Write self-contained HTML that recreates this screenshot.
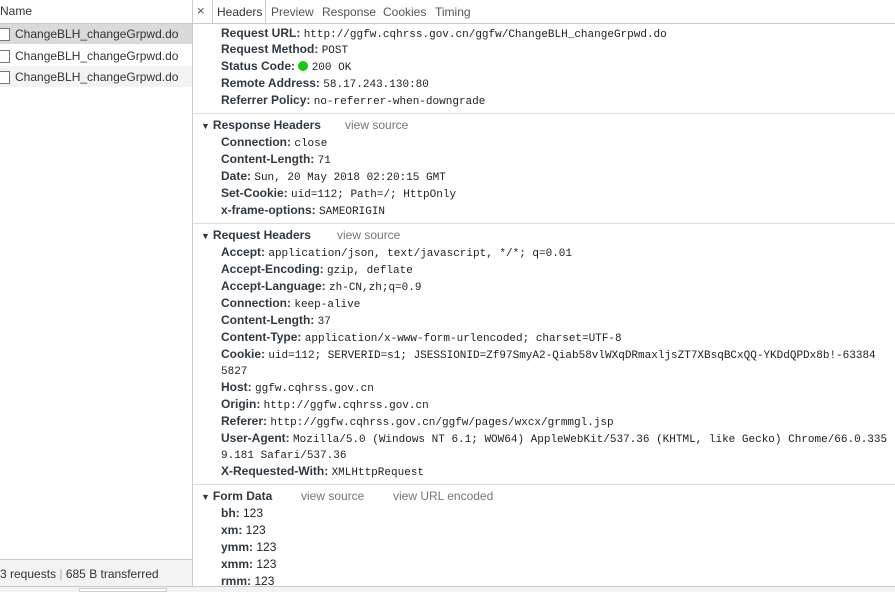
<!DOCTYPE html><html><head><style>
*{margin:0;padding:0;box-sizing:border-box}
body{width:895px;height:592px;overflow:hidden;background:#fff;font-family:"Liberation Sans",sans-serif;font-size:12px;color:#222;position:relative}
.a{position:absolute;white-space:nowrap}
.k{position:absolute;left:221px;white-space:nowrap;color:#222}
.k b{color:#303942;font-weight:bold}
.m{font-family:"Liberation Mono",monospace;font-size:11px;color:#222}
.h{position:absolute;left:201px;white-space:nowrap;font-weight:bold;color:#303942}
.h i{font-style:normal;font-size:9px;margin-right:3px}
.vs{position:absolute;color:#777;white-space:nowrap}
.sep{position:absolute;left:193px;right:0;height:1px;background:#ddd}
.cb{display:inline-block;width:12px;height:13px;border:1px solid #777;vertical-align:middle;margin-right:5px;margin-left:-2px;background:#fff}
</style></head><body>
<!-- left panel -->
<div class="a" style="left:0;top:4px;color:#333">Name</div>
<div class="a" style="left:0;top:23px;width:192px;height:1px;background:#ccc"></div>
<div class="a" style="left:0;top:24px;width:192px;height:20px;background:#dadada"></div>
<div class="a" style="left:0;top:66px;width:192px;height:21px;background:#f3f3f3"></div>
<div class="a" style="left:0;top:26px;line-height:16px;color:#333"><span class="cb"></span>ChangeBLH_changeGrpwd.do</div>
<div class="a" style="left:0;top:48px;line-height:16px;color:#333"><span class="cb"></span>ChangeBLH_changeGrpwd.do</div>
<div class="a" style="left:0;top:69px;line-height:16px;color:#333"><span class="cb"></span>ChangeBLH_changeGrpwd.do</div>
<div class="a" style="left:0;top:559px;width:192px;height:27px;background:#f3f3f3;border-top:1px solid #ccc"></div>
<div class="a" style="left:0;top:567px;color:#333">3 requests <span style="color:#aaa">|</span> 685 B transferred</div>
<div class="a" style="left:0;top:586px;width:895px;height:6px;background:#f3f3f3;border-top:1px solid #ccc"></div>
<div class="a" style="left:79px;top:588px;width:88px;height:4px;background:#fff;border:1px solid #ccc"></div>
<div class="a" style="left:192px;top:0;width:1px;height:586px;background:#ccc"></div>
<!-- tabs -->
<div class="a" style="left:193px;top:23px;width:702px;height:1px;background:#ccc"></div>
<div class="a" style="left:197px;top:3px;color:#555;font-size:13px">×</div>
<div class="a" style="left:212px;top:0;width:1px;height:23px;background:#ccc"></div>
<div class="a" style="left:265px;top:0;width:1px;height:23px;background:#ccc"></div>
<div class="a" style="left:217px;top:5px;color:#333">Headers</div>
<div class="a" style="left:271px;top:5px;color:#555">Preview</div>
<div class="a" style="left:322px;top:5px;color:#555">Response</div>
<div class="a" style="left:383px;top:5px;color:#555">Cookies</div>
<div class="a" style="left:435px;top:5px;color:#555">Timing</div>
<!-- general -->
<div class="k" style="top:26px"><b>Request URL:</b> <span class="m">http://ggfw.cqhrss.gov.cn/ggfw/ChangeBLH_changeGrpwd.do</span></div>
<div class="k" style="top:42px"><b>Request Method:</b> <span class="m">POST</span></div>
<div class="k" style="top:59px"><b>Status Code:</b> <span style="display:inline-block;width:10px;height:10px;border-radius:50%;background:#1c1;vertical-align:-1px"></span> <span class="m">200 OK</span></div>
<div class="k" style="top:76px"><b>Remote Address:</b> <span class="m">58.17.243.130:80</span></div>
<div class="k" style="top:93px"><b>Referrer Policy:</b> <span class="m">no-referrer-when-downgrade</span></div>
<div class="sep" style="top:113px"></div>
<div class="h" style="top:118px"><i>▼</i>Response Headers</div><div class="vs" style="left:345px;top:118px">view source</div>
<div class="k" style="top:135px"><b>Connection:</b> <span class="m">close</span></div>
<div class="k" style="top:152px"><b>Content-Length:</b> <span class="m">71</span></div>
<div class="k" style="top:169px"><b>Date:</b> <span class="m">Sun, 20 May 2018 02:20:15 GMT</span></div>
<div class="k" style="top:186px"><b>Set-Cookie:</b> <span class="m">uid=112; Path=/; HttpOnly</span></div>
<div class="k" style="top:203px"><b>x-frame-options:</b> <span class="m">SAMEORIGIN</span></div>
<div class="sep" style="top:223px"></div>
<div class="h" style="top:228px"><i>▼</i>Request Headers</div><div class="vs" style="left:337px;top:228px">view source</div>
<div class="k" style="top:245px"><b>Accept:</b> <span class="m">application/json, text/javascript, */*; q=0.01</span></div>
<div class="k" style="top:262px"><b>Accept-Encoding:</b> <span class="m">gzip, deflate</span></div>
<div class="k" style="top:279px"><b>Accept-Language:</b> <span class="m">zh-CN,zh;q=0.9</span></div>
<div class="k" style="top:296px"><b>Connection:</b> <span class="m">keep-alive</span></div>
<div class="k" style="top:313px"><b>Content-Length:</b> <span class="m">37</span></div>
<div class="k" style="top:330px"><b>Content-Type:</b> <span class="m">application/x-www-form-urlencoded; charset=UTF-8</span></div>
<div class="k" style="top:347px"><b>Cookie:</b> <span class="m">uid=112; SERVERID=s1; JSESSIONID=Zf97SmyA2-Qiab58vlWXqDRmaxljsZT7XBsqBCxQQ-YKDdQPDx8b!-63384</span></div>
<div class="k" style="top:363px"><span class="m">5827</span></div>
<div class="k" style="top:380px"><b>Host:</b> <span class="m">ggfw.cqhrss.gov.cn</span></div>
<div class="k" style="top:397px"><b>Origin:</b> <span class="m">http://ggfw.cqhrss.gov.cn</span></div>
<div class="k" style="top:414px"><b>Referer:</b> <span class="m">http://ggfw.cqhrss.gov.cn/ggfw/pages/wxcx/grmmgl.jsp</span></div>
<div class="k" style="top:431px"><b>User-Agent:</b> <span class="m">Mozilla/5.0 (Windows NT 6.1; WOW64) AppleWebKit/537.36 (KHTML, like Gecko) Chrome/66.0.335</span></div>
<div class="k" style="top:447px"><span class="m">9.181 Safari/537.36</span></div>
<div class="k" style="top:464px"><b>X-Requested-With:</b> <span class="m">XMLHttpRequest</span></div>
<div class="sep" style="top:484px"></div>
<div class="h" style="top:489px"><i>▼</i>Form Data</div><div class="vs" style="left:301px;top:489px">view source</div><div class="vs" style="left:393px;top:489px">view URL encoded</div>
<div class="k" style="top:506px"><b>bh:</b> 123</div>
<div class="k" style="top:523px"><b>xm:</b> 123</div>
<div class="k" style="top:540px"><b>ymm:</b> 123</div>
<div class="k" style="top:557px"><b>xmm:</b> 123</div>
<div class="k" style="top:574px"><b>rmm:</b> 123</div>
<div class="a" style="left:0;top:586px;width:895px;height:6px;background:#f3f3f3;border-top:1px solid #ccc"></div>
<div class="a" style="left:79px;top:588px;width:88px;height:4px;background:#fff;border:1px solid #ccc"></div>
</body></html>
